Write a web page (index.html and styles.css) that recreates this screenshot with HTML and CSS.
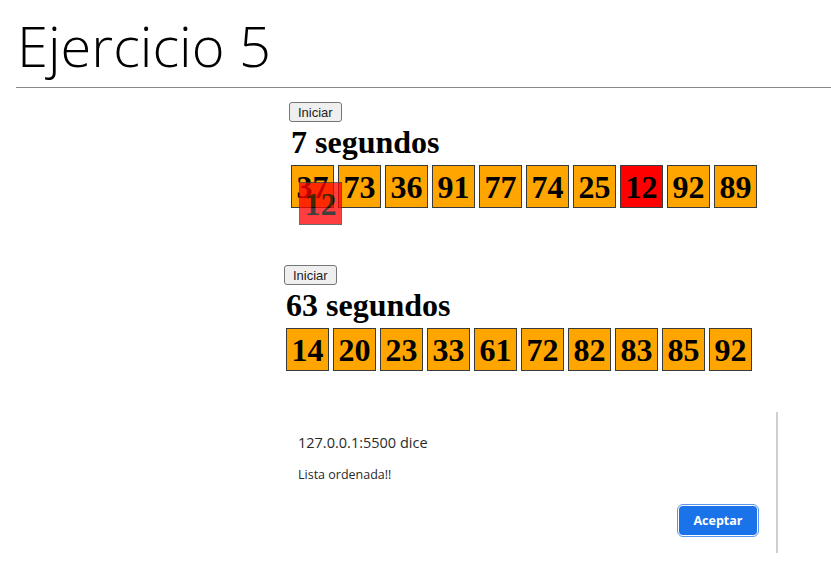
FILE: index.html
```html
<!DOCTYPE html>
<html lang="es">
<head>
<meta charset="utf-8">
<title>Ejercicio 5</title>
<link rel="stylesheet" href="styles.css">
</head>
<body>
<header class="page-head">
  <h1 class="page-title">Ejercicio 5</h1>
  <div class="rule"></div>
</header>

<section class="run run-one">
  <button class="start">Iniciar</button>
  <h1 class="time">7 segundos</h1>
  <div class="boxes">
    <div class="box">37</div>
    <div class="box">73</div>
    <div class="box">36</div>
    <div class="box">91</div>
    <div class="box">77</div>
    <div class="box">74</div>
    <div class="box">25</div>
    <div class="box red">12</div>
    <div class="box">92</div>
    <div class="box">89</div>
    <div class="box red floating">12</div>
  </div>
</section>

<section class="run run-two">
  <button class="start">Iniciar</button>
  <h1 class="time">63 segundos</h1>
  <div class="boxes">
    <div class="box">14</div>
    <div class="box">20</div>
    <div class="box">23</div>
    <div class="box">33</div>
    <div class="box">61</div>
    <div class="box">72</div>
    <div class="box">82</div>
    <div class="box">83</div>
    <div class="box">85</div>
    <div class="box">92</div>
  </div>
</section>

<div class="alert">
  <div class="alert-origin">127.0.0.1:5500 dice</div>
  <div class="alert-msg">Lista ordenada!!</div>
  <div class="alert-actions">
    <button class="accept">Aceptar</button>
  </div>
</div>
</body>
</html>
```

FILE: styles.css
```css
html, body {
  margin: 0;
  padding: 0;
  background: #fff;
}

body {
  font-family: "Liberation Serif", serif;
  color: #000;
  position: relative;
  width: 831px;
  height: 566px;
  overflow: hidden;
}

.page-head {
  padding-left: 16px;
  padding-top: 9px;
}

.page-title {
  margin: 0 0 0 1px;
  font-family: "Open Sans", sans-serif;
  font-weight: 300;
  font-size: 56px;
  line-height: 72px;
  color: #000;
}

.rule {
  height: 1px;
  background: #8a8a8a;
  margin-top: 6px;
}

.run {
  display: flex;
  flex-direction: column;
  align-items: flex-start;
}

.run-one {
  margin-left: 289px;
  margin-top: 14px;
}

.run-two {
  margin-left: 284px;
  margin-top: 57px;
}

.start {
  font-family: "Liberation Sans", sans-serif;
  font-size: 13px;
  line-height: 15px;
  padding: 1px 8px;
  height: 20px;
  border: 1px solid #767676;
  border-radius: 3px;
  background: #efefef;
  color: #222;
}

.time {
  margin: 2px 0 0 2px;
  font-family: "Liberation Serif", serif;
  font-weight: bold;
  font-size: 32px;
  line-height: 36px;
}

.boxes {
  position: relative;
  display: flex;
  gap: 4px;
  margin-left: 2px;
  margin-top: 5px;
}

.box {
  width: 41px;
  height: 41px;
  border: 1px solid #3a3a3a;
  background: #ffa500;
  font-family: "Liberation Serif", serif;
  font-weight: bold;
  font-size: 32px;
  line-height: 42px;
  text-align: center;
}

.box.red {
  background: #ff0000;
}

.floating {
  position: absolute;
  left: 8px;
  top: 17px;
  opacity: 0.75;
}

.alert {
  position: absolute;
  left: 274px;
  top: 412px;
  width: 504px;
  height: 141px;
  box-sizing: border-box;
  background: #fff;
  border-right: 2px solid #cfcfcf;
  font-family: "Open Sans", sans-serif;
  color: #2a2a2a;
  display: flex;
  flex-direction: column;
  padding-left: 24px;
}

.alert-origin {
  margin-top: 20px;
  font-size: 14.5px;
  line-height: 22px;
}

.alert-msg {
  margin-top: 12px;
  font-size: 12.5px;
  line-height: 18px;
}

.alert-actions {
  display: flex;
  justify-content: flex-end;
  padding-right: 19px;
  margin-top: 22px;
}

.accept {
  width: 78px;
  height: 29px;
  border: none;
  border-radius: 4px;
  background: #1a73e8;
  color: #fff;
  font-family: "Open Sans", sans-serif;
  font-weight: 700;
  font-size: 12.5px;
  outline: 1.5px solid #5b95ee;
  outline-offset: 1.5px;
}
```
